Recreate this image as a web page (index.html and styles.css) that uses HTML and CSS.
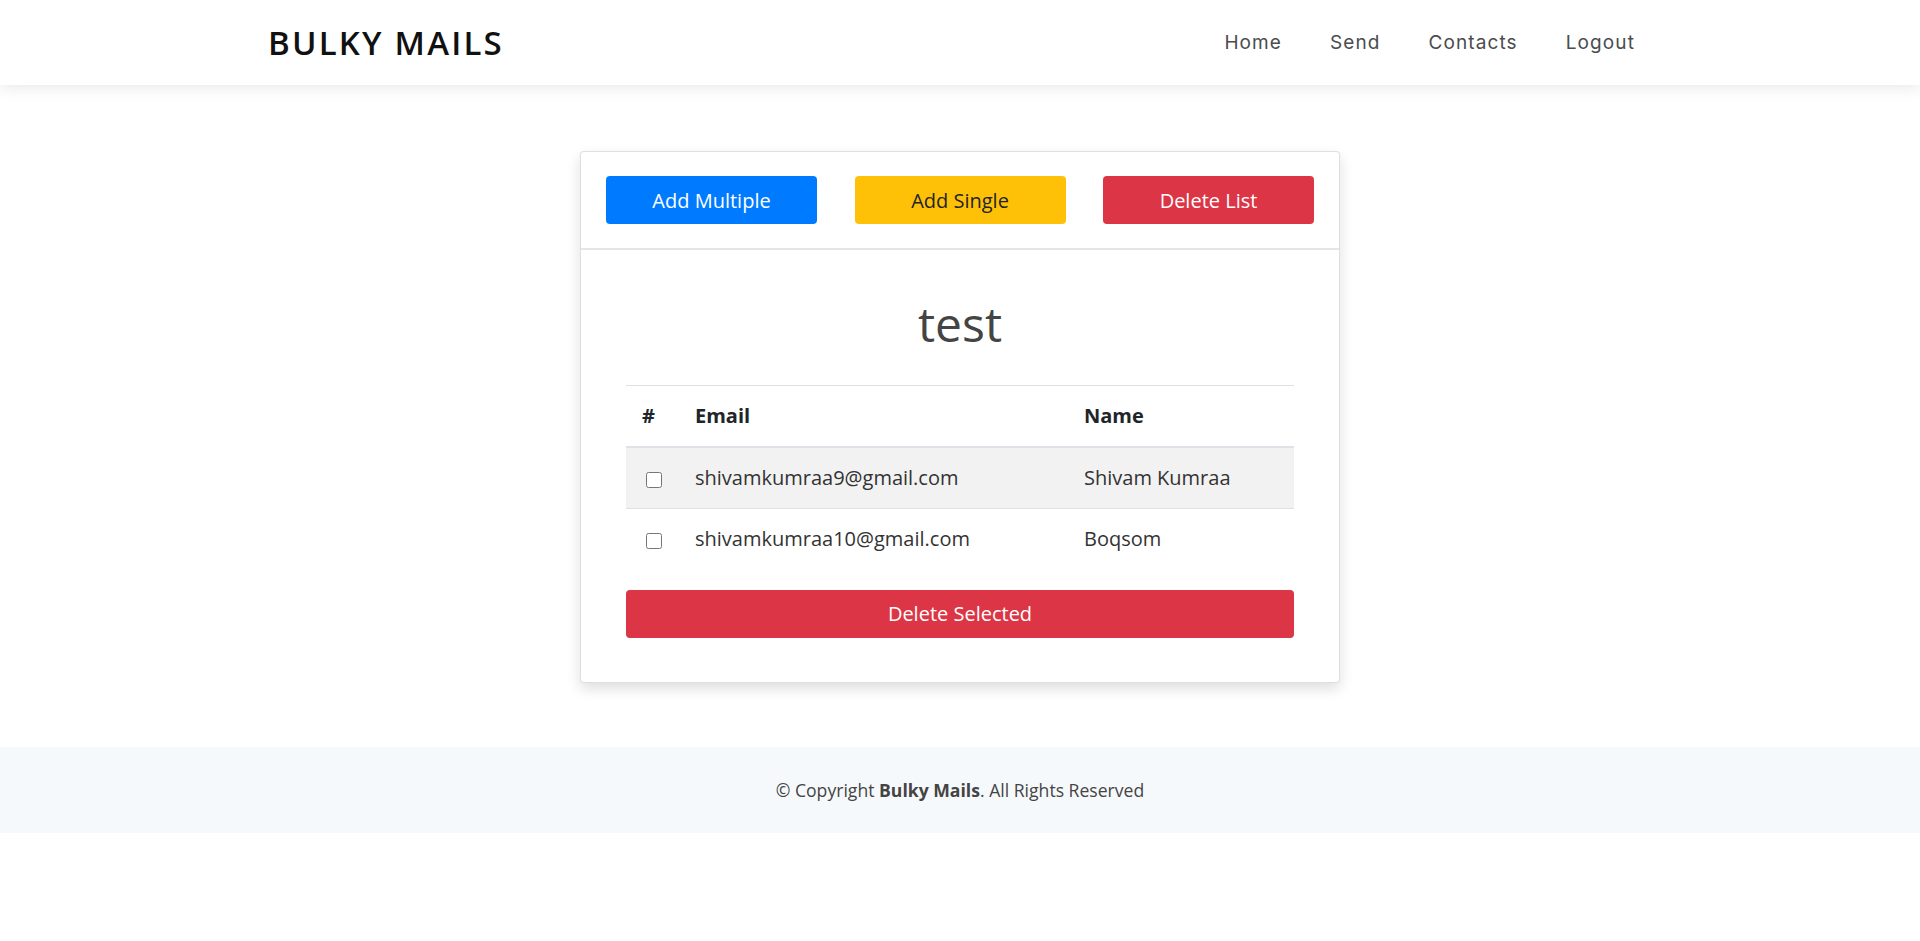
FILE: index.html
```html
<!DOCTYPE html>
<html lang="en">
<head>
<meta charset="utf-8">
<title>Bulky Mails</title>
<link rel="stylesheet" href="styles.css">
</head>
<body>
<header class="site-header">
  <div class="header-inner">
    <a class="logo" href="#">BULKY MAILS</a>
    <nav class="nav">
      <a href="#">Home</a>
      <a href="#">Send</a>
      <a href="#">Contacts</a>
      <a href="#">Logout</a>
    </nav>
  </div>
</header>

<main class="main">
  <div class="card">
    <div class="card-header">
      <button class="btn btn-blue">Add Multiple</button>
      <button class="btn btn-yellow">Add Single</button>
      <button class="btn btn-red">Delete List</button>
    </div>
    <div class="card-body">
      <h1 class="list-title">test</h1>
      <table class="table">
        <colgroup>
          <col class="col-check">
          <col class="col-email">
          <col class="col-name">
        </colgroup>
        <thead>
          <tr><th>#</th><th>Email</th><th>Name</th></tr>
        </thead>
        <tbody>
          <tr class="striped"><td><input type="checkbox" class="check"></td><td>shivamkumraa9@gmail.com</td><td>Shivam Kumraa</td></tr>
          <tr><td><input type="checkbox" class="check"></td><td>shivamkumraa10@gmail.com</td><td>Boqsom</td></tr>
        </tbody>
      </table>
      <button class="btn btn-red btn-block">Delete Selected</button>
    </div>
  </div>
</main>

<footer class="footer">
  <p>© Copyright <strong>Bulky Mails</strong>. All Rights Reserved</p>
</footer>
</body>
</html>
```

FILE: styles.css
```css
* { box-sizing: border-box; }
html, body { margin: 0; padding: 0; }
body {
  font-family: "Open Sans", "Liberation Sans", sans-serif;
  color: #444;
  background: #fff;
}

.site-header {
  height: 85px;
  background: #fff;
  box-shadow: 0 2px 15px rgba(0, 0, 0, 0.1);
  position: relative;
  z-index: 2;
}
.header-inner {
  height: 100%;
  display: flex;
  align-items: center;
  justify-content: space-between;
  padding: 0 285px 0 268px;
}
.logo {
  font-family: "Open Sans", sans-serif;
  font-size: 33px;
  font-weight: 600;
  letter-spacing: 2.2px;
  color: #111;
  text-decoration: none;
  line-height: 1;
}
.nav {
  display: flex;
  gap: 48px;
}
.nav a {
  font-family: "Inter", "Noto Sans", sans-serif;
  font-size: 19px;
  font-weight: 400;
  letter-spacing: 1.1px;
  color: #4a4c4e;
  text-decoration: none;
}

.main {
  display: flex;
  justify-content: center;
  padding: 66px 0 64px;
}
.card {
  width: 760px;
  background: #fff;
  border: 1px solid rgba(0, 0, 0, 0.125);
  border-radius: 4px;
  box-shadow: 0 6px 14px rgba(0, 0, 0, 0.13);
}
.card-header {
  display: flex;
  justify-content: space-between;
  padding: 24px 25px;
  border-bottom: 2px solid rgba(0, 0, 0, 0.1);
}
.card-header .btn { width: 211px; }

.btn {
  height: 48px;
  border: none;
  border-radius: 4px;
  font-family: "Open Sans", sans-serif;
  font-size: 20px;
  cursor: pointer;
}
.btn-blue { background: #007bff; color: #fff; }
.btn-yellow { background: #ffc107; color: #212529; }
.btn-red { background: #dc3545; color: #fff; }
.btn-block { width: 100%; margin-top: 20px; display: block; }

.card-body { padding: 45px 45px 44px; }
.list-title {
  margin: 0 0 33px;
  text-align: center;
  font-size: 48px;
  font-weight: 400;
  line-height: 57px;
  color: #444;
}

.table {
  width: 100%;
  border-collapse: collapse;
  table-layout: fixed;
  font-size: 20px;
}
.col-check { width: 53px; }
.col-email { width: 389px; }
.table th, .table td {
  text-align: left;
  padding: 15px 16px;
  line-height: 30px;
  height: 61px;
  vertical-align: middle;
}
.table th {
  font-weight: 700;
  color: #212529;
  border-top: 1px solid #dee2e6;
  border-bottom: 2px solid #dee2e6;
}
.table td { color: #333; }
.table tbody tr.striped td {
  background: #f2f2f2;
  border-bottom: 1px solid #dee2e6;
}
.check {
  width: 16px;
  height: 16px;
  margin: 3px 3px 3px 4px;
  vertical-align: middle;
}

.footer {
  background: #f6f9fc;
  height: 86px;
  display: flex;
  align-items: center;
  justify-content: center;
}
.footer p {
  margin: 0;
  font-size: 17.6px;
  color: #444;
}
.footer strong { font-weight: 700; }
```
